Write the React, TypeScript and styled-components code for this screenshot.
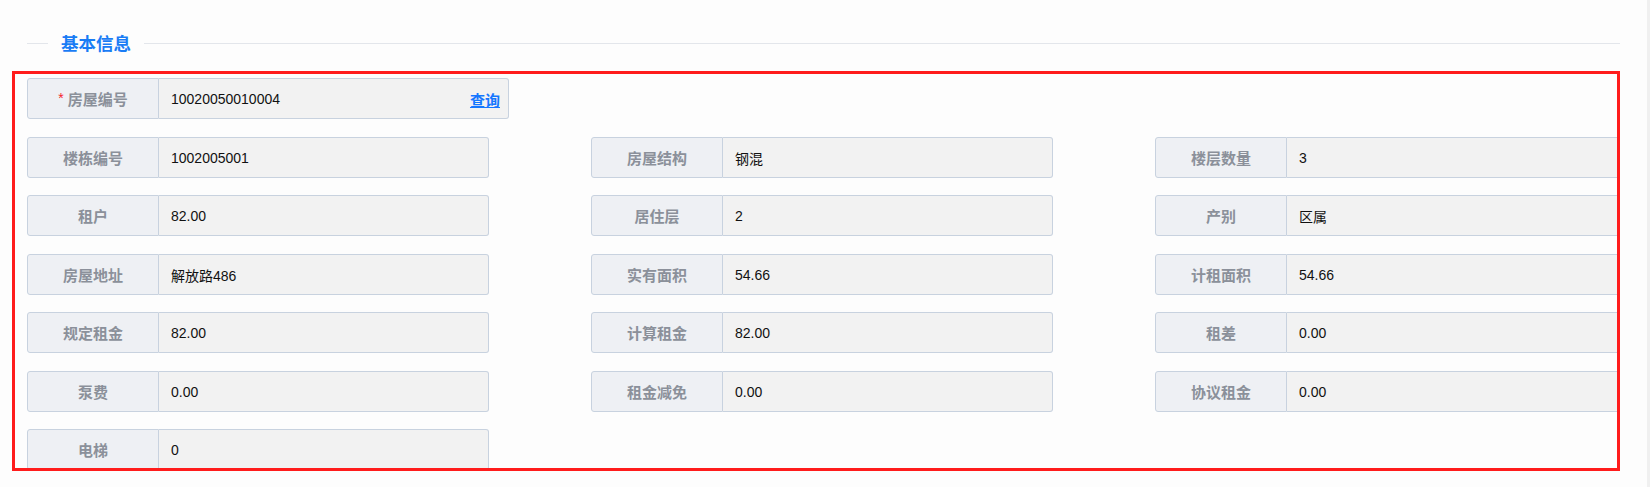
import React from "react";
import styled, { createGlobalStyle } from "styled-components";

const GlobalStyle = createGlobalStyle`
  html, body {
    margin: 0;
    padding: 0;
    background: #f0f0f0;
  }
  * { box-sizing: border-box; }
`;

const Page = styled.div`
  width: 1647px;
  height: 487px;
  background: #fdfdfd;
  overflow: hidden;
  padding-top: 31px;
  font-family: "Liberation Sans", "Noto Sans CJK SC", sans-serif;
`;

const Divider = styled.div`
  display: flex;
  align-items: center;
  height: 24px;
  margin-left: 27px;
  width: 1593px;
`;

const Line = styled.div<{ $w?: number }>`
  height: 1px;
  background: #e3e6eb;
  ${(p) => (p.$w ? `width: ${p.$w}px;` : "flex: 1;")}
`;

const Title = styled.span`
  padding: 0 13px;
  font-family: "Noto Sans CJK SC", sans-serif;
  font-size: 17.5px;
  font-weight: 700;
  color: #1a7cf5;
  line-height: 24px;
`;

const Box = styled.div`
  margin-top: 16px;
  margin-left: 12px;
  width: 1608px;
  height: 400px;
  border: 3px solid #ff1c1c;
  padding: 4px 0 0 12px;
  overflow: hidden;
`;

const Grid = styled.div`
  display: grid;
  grid-template-columns: repeat(3, 462px);
  column-gap: 102px;
  row-gap: 17.5px;
`;

const Field = styled.div<{ $wide?: boolean; $edge?: boolean }>`
  display: flex;
  height: 41px;
  width: ${(p) => (p.$wide ? "482px" : p.$edge ? "480px" : "462px")};
  ${(p) => (p.$wide ? "grid-column: 1 / -1;" : "")}
`;

const Label = styled.div`
  width: 132px;
  flex: none;
  display: flex;
  align-items: center;
  justify-content: center;
  background: #eef0f4;
  border: 1px solid #c8d2df;
  border-radius: 3px 0 0 3px;
  font-family: "Noto Sans CJK SC", sans-serif;
  font-size: 15px;
  font-weight: 700;
  color: #8b909a;
`;

const Star = styled.span`
  color: #f5222d;
  font-family: "Liberation Sans", sans-serif;
  font-size: 14px;
  font-weight: 400;
  margin-right: 4px;
  position: relative;
  top: -1px;
`;

const Value = styled.div`
  flex: 1;
  display: flex;
  align-items: center;
  justify-content: space-between;
  padding: 1px 8px 0 12px;
  background: #f2f2f2;
  border: 1px solid #c8d2df;
  border-left: none;
  border-radius: 0 3px 3px 0;
  font-family: "Liberation Sans", "Noto Sans CJK SC", sans-serif;
  font-size: 14px;
  color: #111;
`;

const Query = styled.a`
  font-family: "Noto Sans CJK SC", sans-serif;
  font-size: 15px;
  font-weight: 700;
  color: #1677ff;
  text-decoration: underline;
  cursor: pointer;
`;

const fields: [string, string][] = [
  ["楼栋编号", "1002005001"],
  ["房屋结构", "钢混"],
  ["楼层数量", "3"],
  ["租户", "82.00"],
  ["居住层", "2"],
  ["产别", "区属"],
  ["房屋地址", "解放路486"],
  ["实有面积", "54.66"],
  ["计租面积", "54.66"],
  ["规定租金", "82.00"],
  ["计算租金", "82.00"],
  ["租差", "0.00"],
  ["泵费", "0.00"],
  ["租金减免", "0.00"],
  ["协议租金", "0.00"],
  ["电梯", "0"],
];

export default function App() {
  return (
    <>
      <GlobalStyle />
      <Page>
        <Divider>
          <Line $w={21} />
          <Title>基本信息</Title>
          <Line />
        </Divider>
        <Box>
          <Grid>
            <Field $wide>
              <Label>
                <Star>*</Star>房屋编号
              </Label>
              <Value>
                <span>10020050010004</span>
                <Query>查询</Query>
              </Value>
            </Field>
            {fields.map(([k, v], i) => (
              <Field key={k} $edge={i % 3 === 2}>
                <Label>{k}</Label>
                <Value>
                  <span>{v}</span>
                </Value>
              </Field>
            ))}
          </Grid>
        </Box>
      </Page>
    </>
  );
}
